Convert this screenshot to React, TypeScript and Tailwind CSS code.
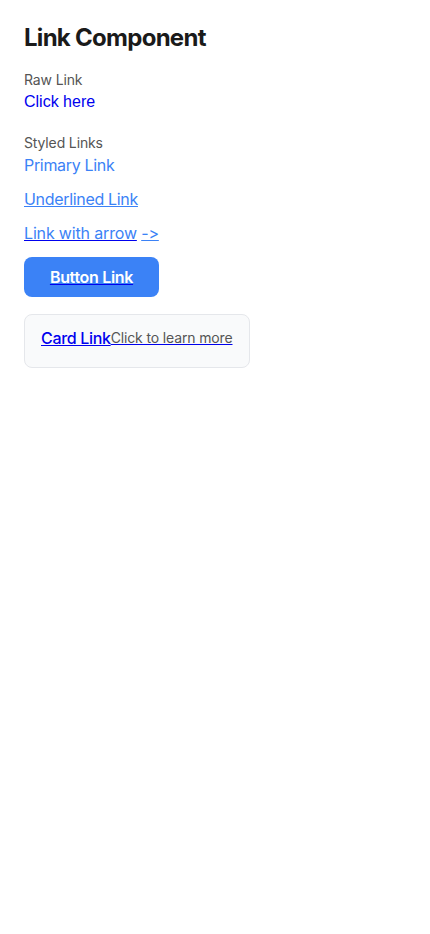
export default function App() {
  return (
    <div className="min-h-screen bg-white p-6 font-['Inter',sans-serif] [font-feature-settings:'calt'_0]">
      <h1 className="text-2xl font-bold leading-[28px] tracking-[-0.03em] text-[#1a1a1a] mb-[18px]">Link Component</h1>

      <section className="mb-[19px]">
        <p className="text-sm leading-5 tracking-[-0.01em] text-[#555]">Raw Link</p>
        <a href="#" className="block text-base leading-6 text-[#0000ee] font-['Liberation_Sans',Arial,sans-serif]">
          Click here
        </a>
      </section>

      <section className="flex flex-col items-start tracking-[-0.02em]">
        <p className="text-sm leading-5 tracking-[-0.01em] text-[#555]">Styled Links</p>
        <a href="#" className="text-base leading-6 text-[#3b82f6]">
          Primary Link
        </a>
        <a href="#" className="mt-[10px] text-base leading-6 text-[#3b82f6] underline">
          Underlined Link
        </a>
        <div className="mt-[10px] text-base leading-6 text-[#3b82f6] tracking-[-0.01em]">
          <a href="#" className="underline decoration-[#0000ee]">
            Link with arrow
          </a>{' '}
          <span className="inline-block underline">-&gt;</span>
        </div>
        <a
          href="#"
          className="mt-3 flex h-10 w-[135px] items-center justify-center rounded-lg bg-[#3b82f6] text-base font-semibold text-white underline decoration-[#0000ee]"
        >
          Button Link
        </a>
        <a
          href="#"
          className="mt-[17px] flex items-center rounded-lg border border-[#e5e7eb] bg-[#f9fafb] px-4 pt-[11px] pb-[17px] underline decoration-[#0000ee]"
        >
          <span className="text-base font-medium leading-6 text-[#0000ee]">Card Link</span>
          <span className="text-sm leading-5 tracking-[-0.01em] text-[#555]">Click to learn more</span>
        </a>
      </section>
    </div>
  );
}
